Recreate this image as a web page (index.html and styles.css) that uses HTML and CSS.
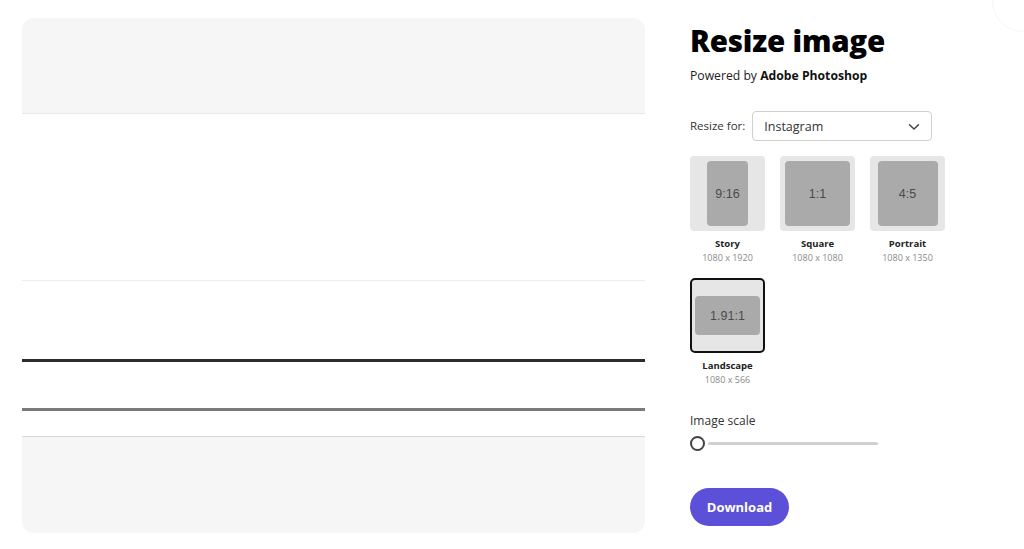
FILE: index.html
```html
<!DOCTYPE html>
<html>
<head>
<meta charset="utf-8">
<link rel="stylesheet" href="styles.css">
</head>
<body>
<div class="page">
  <div class="canvas">
    <div class="c-top"></div>
    <div class="c-mid1"></div>
    <div class="c-mid2"></div>
    <div class="c-mid3"></div>
    <div class="c-mid4"></div>
    <div class="c-bottom"></div>
  </div>
  <div class="panel">
    <h1 class="title">Resize image</h1>
    <div class="powered">Powered by <b>Adobe Photoshop</b></div>
    <div class="resize-row">
      <span class="resize-label">Resize for:</span>
      <div class="select">
        <span>Instagram</span>
        <svg class="chev" width="12" height="8" viewBox="0 0 12 8"><path d="M1.5 1.8 L6 6 L10.5 1.8" fill="none" stroke="#444" stroke-width="1.5" stroke-linecap="round" stroke-linejoin="round"/></svg>
      </div>
    </div>
    <div class="tiles">
      <div class="opt">
        <div class="tile"><div class="inner story">9:16</div></div>
        <div class="name">Story</div>
        <div class="dim">1080 x 1920</div>
      </div>
      <div class="opt">
        <div class="tile"><div class="inner square">1:1</div></div>
        <div class="name">Square</div>
        <div class="dim">1080 x 1080</div>
      </div>
      <div class="opt">
        <div class="tile"><div class="inner portrait">4:5</div></div>
        <div class="name">Portrait</div>
        <div class="dim">1080 x 1350</div>
      </div>
      <div class="opt">
        <div class="tile selected"><div class="inner landscape">1.91:1</div></div>
        <div class="name">Landscape</div>
        <div class="dim">1080 x 566</div>
      </div>
    </div>
    <div class="scale-label">Image scale</div>
    <div class="slider">
      <div class="knob"></div>
      <div class="track"></div>
    </div>
    <button class="download">Download</button>
  </div>
</div>
<div class="corner"></div>
</body>
</html>
```
FILE: styles.css
```css
html, body {
  margin: 0;
  padding: 0;
  background: #ffffff;
  overflow: hidden;
}
body {
  font-family: "Open Sans", "Noto Sans", sans-serif;
  color: #222;
  width: 1024px;
  height: 549px;
}
.page {
  display: flex;
  padding: 18px 0 0 22px;
  gap: 45px;
}
.canvas {
  width: 623px;
  height: 515px;
  border-radius: 12px;
  overflow: hidden;
  background: #ffffff;
  display: flex;
  flex-direction: column;
}
.c-top {
  height: 95px;
  background: #f6f6f6;
  border-bottom: 1px solid #e8e8e8;
  flex: none;
}
.c-mid1 {
  height: 166px;
  border-bottom: 1px solid #ededed;
  flex: none;
}
.c-mid2 {
  height: 78px;
  border-bottom: 3px solid #2c2c2c;
  flex: none;
}
.c-mid3 {
  height: 46px;
  border-bottom: 3px solid #7a7a7a;
  flex: none;
}
.c-mid4 {
  height: 25px;
  border-bottom: 1px solid #d8d8d8;
  flex: none;
}
.c-bottom {
  flex: 1;
  background: #f6f6f6;
}
.panel {
  display: flex;
  flex-direction: column;
  width: 290px;
}
.title {
  margin: 4px 0 0 0;
  font-size: 29.5px;
  font-weight: 800;
  color: #000;
  line-height: 38px;
  letter-spacing: -0.2px;
}
.powered {
  margin-top: 8px;
  font-size: 12.2px;
  line-height: 16px;
  color: #222;
}
.powered b {
  font-weight: 700;
  color: #111;
}
.resize-row {
  display: flex;
  align-items: center;
  margin-top: 27px;
  gap: 7px;
}
.resize-label {
  font-size: 11.5px;
  color: #333;
  margin-top: -1px;
}
.select {
  width: 156px;
  height: 28px;
  border: 1px solid #cfcfcf;
  border-radius: 4px;
  display: flex;
  align-items: center;
  justify-content: space-between;
  padding: 0 11px 0 11px;
  box-sizing: content-box;
  font-size: 12.5px;
  color: #333;
}
.chev { margin-top: 1px; }
.tiles {
  display: grid;
  grid-template-columns: repeat(3, 75px);
  column-gap: 15px;
  row-gap: 14px;
  margin-top: 15px;
}
.opt {
  display: flex;
  flex-direction: column;
  align-items: center;
}
.tile {
  width: 75px;
  height: 75px;
  box-sizing: border-box;
  background: #e6e6e6;
  border-radius: 4px;
  display: flex;
  align-items: center;
  justify-content: center;
}
.tile.selected {
  border: 2px solid #111;
  border-radius: 5px;
}
.inner {
  background: #aaaaaa;
  border-radius: 4px;
  display: flex;
  align-items: center;
  justify-content: center;
  font-family: "Liberation Sans", Arial, sans-serif;
  font-size: 12.5px;
  color: #4a4a4a;
}
.story { width: 41px; height: 65px; }
.square { width: 65px; height: 65px; }
.portrait { width: 60px; height: 65px; }
.landscape { width: 65px; height: 39px; }
.name {
  margin-top: 6px;
  font-size: 9.5px;
  font-weight: 700;
  color: #222;
  line-height: 13px;
}
.dim {
  font-size: 9px;
  color: #888;
  line-height: 13px;
  margin-top: 1px;
}
.scale-label {
  margin-top: 27px;
  font-size: 12px;
  color: #333;
  line-height: 16px;
}
.slider {
  display: flex;
  align-items: center;
  margin-top: 7px;
}
.knob {
  width: 11px;
  height: 11px;
  border: 2px solid #444;
  border-radius: 50%;
  background: #fff;
  flex: none;
}
.track {
  width: 170px;
  height: 3px;
  background: #d0d0d0;
  border-radius: 2px;
  margin-left: 3px;
}
.download {
  margin-top: 37px;
  width: 99px;
  height: 38px;
  border: none;
  border-radius: 19px;
  background: #5b50d7;
  color: #fff;
  font-family: "Open Sans", "Noto Sans", sans-serif;
  font-size: 13px;
  font-weight: 700;
  padding: 0;
  cursor: pointer;
}
.corner {
  position: absolute;
  top: -30px;
  right: -30px;
  width: 60px;
  height: 60px;
  border-radius: 50%;
  border: 1px solid #f6f6f6;
}
```
